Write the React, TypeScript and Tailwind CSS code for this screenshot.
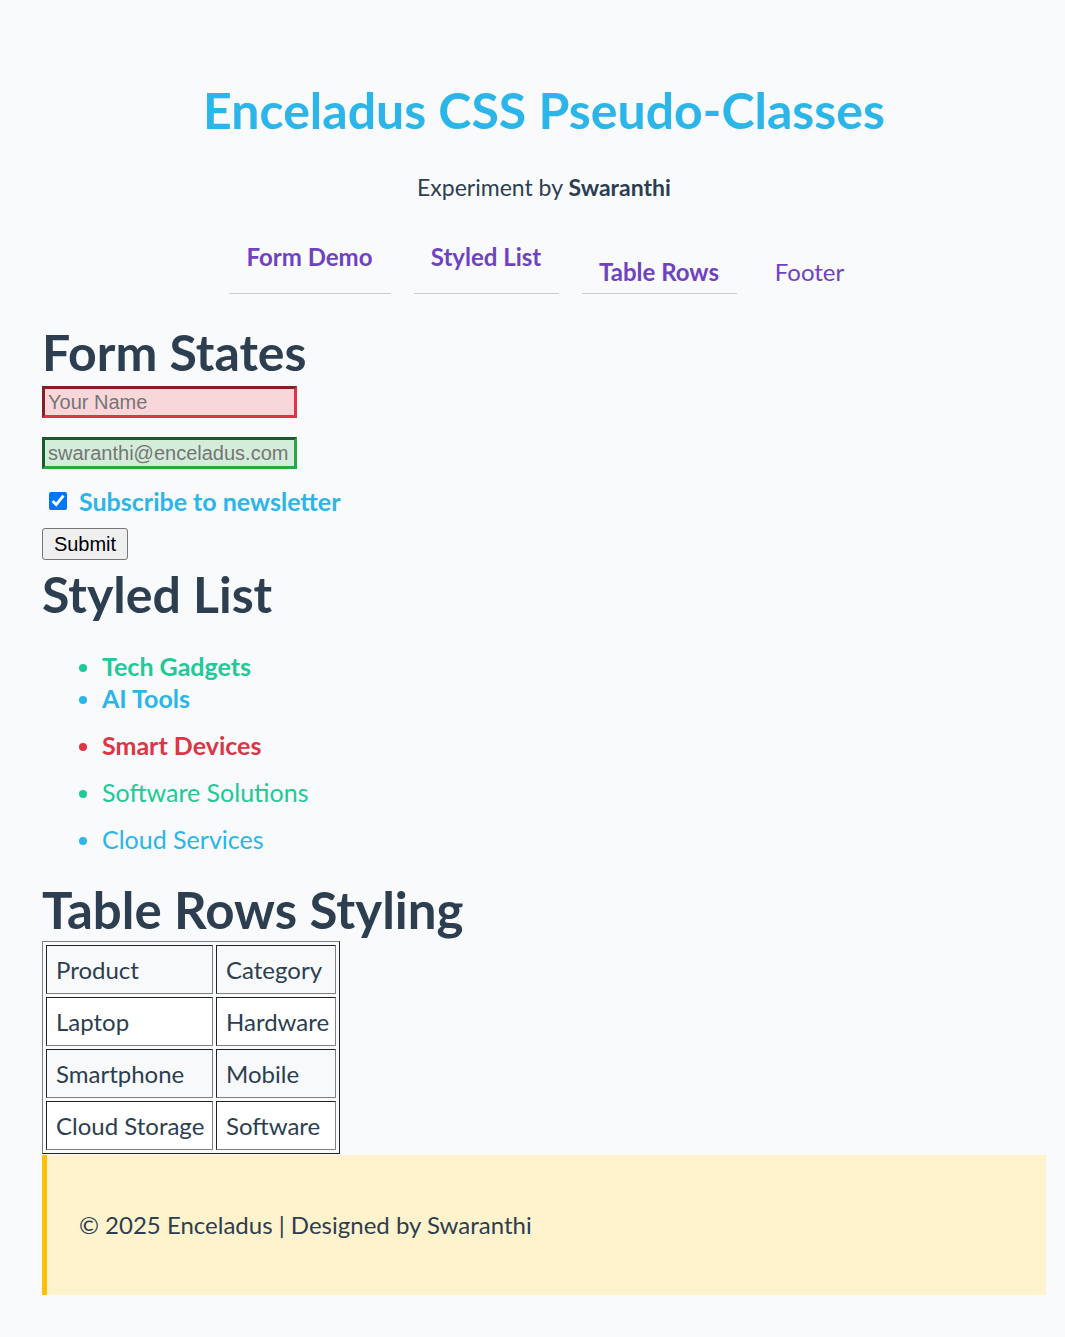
const navItems = [
  { label: "Form Demo", w: "w-[162px]", cls: "font-bold pb-[18px] border-[#cccccc]" },
  { label: "Styled List", w: "w-[145px]", cls: "font-bold pb-[18px] border-[#cccccc]" },
  { label: "Table Rows", w: "w-[155px]", cls: "font-bold pb-[3px] border-[#cccccc]" },
  { label: "Footer", w: "w-[100px]", cls: "font-normal pb-[3px] border-transparent" },
];

const listItems = [
  { text: "Tech Gadgets", cls: "text-[#20c997] font-bold" },
  { text: "AI Tools", cls: "text-[#2bb5e8] font-bold" },
  { text: "Smart Devices", cls: "text-[#dc3545] font-bold mt-[15px]" },
  { text: "Software Solutions", cls: "text-[#20c997] mt-[15px]" },
  { text: "Cloud Services", cls: "text-[#2bb5e8] mt-[15px]" },
];

const rows = [
  ["Product", "Category"],
  ["Laptop", "Hardware"],
  ["Smartphone", "Mobile"],
  ["Cloud Storage", "Software"],
];

export default function App() {
  return (
    <div className="min-h-screen bg-[#f8fafc] pl-[42px] pr-[19px] pb-[42px] font-['Lato',sans-serif] text-[#2c3e50]">
      {/* Header */}
      <header className="pt-[82px] text-center">
        <h1 className="text-[50px] leading-[56px] font-bold text-[#2bb5e8]">Enceladus CSS Pseudo-Classes</h1>
        <p className="mt-[33px] text-[23px] leading-[33px]">
          Experiment by <strong className="font-bold">Swaranthi</strong>
        </p>
      </header>

      {/* Nav */}
      <nav className="mt-[35px] flex justify-center items-end gap-[23px]">
        {navItems.map((n) => (
          <a
            key={n.label}
            href="#"
            className={`${n.w} ${n.cls} border-b text-center text-[24px] leading-[36px] text-[#6f42c1]`}
          >
            {n.label}
          </a>
        ))}
      </nav>

      {/* Form */}
      <section>
        <h2 className="mt-[28px] text-[50px] leading-[60px] font-bold">Form States</h2>
        <input
          type="text"
          placeholder="Your Name"
          className="mt-[4px] block w-[255px] h-[32px] px-[3px] border-[3px] border-t-[#8a1c27] border-l-[#8a1c27] border-b-[#dc3545] border-r-[#dc3545] bg-[#f8d7da] font-['Liberation_Sans',Arial,sans-serif] text-[20px] placeholder:text-[#757575] outline-none"
        />
        <input
          type="email"
          placeholder="swaranthi@enceladus.com"
          className="mt-[19px] block w-[255px] h-[32px] px-[3px] border-[3px] border-t-[#1a5b2a] border-l-[#1a5b2a] border-b-[#28a745] border-r-[#28a745] bg-[#d4edda] font-['Liberation_Sans',Arial,sans-serif] text-[20px] placeholder:text-[#757575] outline-none"
        />
        <label className="mt-[14px] flex items-center gap-[12px] pl-[7px] text-[25px] leading-[36px] font-bold text-[#2bb5e8]">
          <input type="checkbox" defaultChecked className="w-[18px] h-[18px] accent-[#0075ff]" />
          Subscribe to newsletter
        </label>
        <button className="mt-[9px] block w-[86px] h-[32px] rounded-[3px] border border-[#767676] bg-[#efefef] font-['Liberation_Sans',Arial,sans-serif] text-[20px] text-black">
          Submit
        </button>
      </section>

      {/* Styled list */}
      <section>
        <h2 className="mt-[4px] text-[50px] leading-[60px] font-bold">Styled List</h2>
        <ul className="mt-[26px] pl-[60px] list-disc text-[25px] leading-[32px]">
          {listItems.map((l) => (
            <li key={l.text} className={l.cls}>
              {l.text}
            </li>
          ))}
        </ul>
      </section>

      {/* Table */}
      <section>
        <h2 className="mt-[25px] text-[51px] leading-[60px] font-bold">Table Rows Styling</h2>
        <table className="mt-[1px] table-fixed w-[298px] border-separate border-spacing-[3px] border border-t-[#808080] border-l-[#808080] border-b-[#222222] border-r-[#222222] text-[24px]">
          <colgroup>
            <col className="w-[167px]" />
            <col className="w-[120px]" />
          </colgroup>
          <tbody>
            {rows.map((r, i) => (
              <tr key={r[0]} className={i % 2 === 0 ? "bg-[#f8f9fa]" : "bg-white"}>
                <td className="h-[49px] px-[9px] whitespace-nowrap border border-t-[#222222] border-l-[#222222] border-b-[#808080] border-r-[#808080] leading-[36px]">
                  {r[0]}
                </td>
                <td className="h-[49px] px-[9px] whitespace-nowrap border border-t-[#222222] border-l-[#222222] border-b-[#808080] border-r-[#808080] leading-[36px]">
                  {r[1]}
                </td>
              </tr>
            ))}
          </tbody>
        </table>
      </section>

      {/* Footer */}
      <footer className="mt-[1px] h-[140px] flex items-center pl-[32px] border-l-[5px] border-[#ffc107] bg-[#fff3cd] text-[24px]">
        © 2025 Enceladus | Designed by Swaranthi
      </footer>
    </div>
  );
}
